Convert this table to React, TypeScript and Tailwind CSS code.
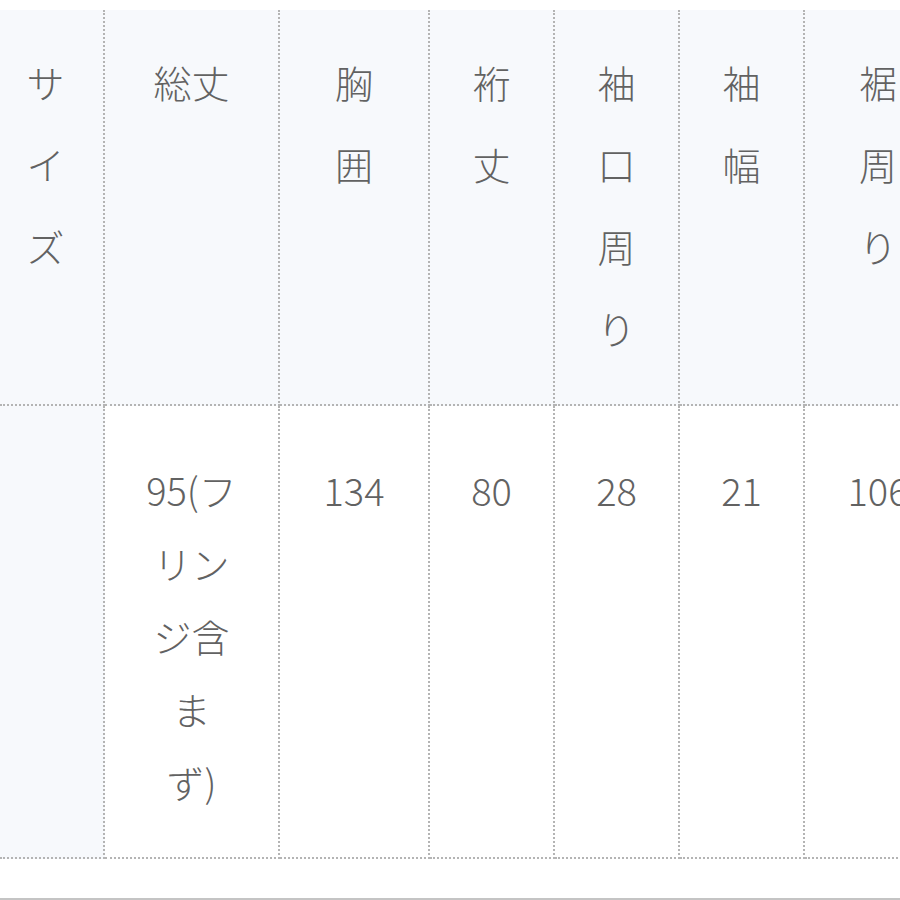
import React from "react";

const headers: { lines: string[]; w: string; extra?: string }[] = [
  { lines: ["サ", "イ", "ズ"], w: "w-[105px]", extra: "pr-[12px]" },
  { lines: ["総丈"], w: "w-[175px]" },
  { lines: ["胸", "囲"], w: "w-[150px]" },
  { lines: ["裄", "丈"], w: "w-[125px]" },
  { lines: ["袖", "口", "周", "り"], w: "w-[125px]" },
  { lines: ["袖", "幅"], w: "w-[125px]" },
  { lines: ["裾", "周", "り"], w: "w-[148px]" },
];

const body: string[][] = [
  [],
  ["95(フ", "リン", "ジ含", "ま", "ず)"],
  ["134"],
  ["80"],
  ["28"],
  ["21"],
  ["106"],
];

export default function App() {
  return (
    <div className="w-[900px] h-[900px] overflow-hidden bg-white flex flex-col border-b-2 border-[#c4c4c4] font-['Noto_Sans_CJK_JP','Liberation_Sans',sans-serif] text-[38px] font-light text-[#626262]">
      <div className="pt-[10px]">
        <table className="table-fixed border-separate border-spacing-0 w-[953px]">
          <tbody>
            <tr>
              {headers.map((h, i) => (
                <th
                  key={i}
                  className={`${h.w} ${h.extra ?? ""} h-[396px] align-top pt-[31px] font-light text-center bg-[#f7f9fc] border-r-2 border-b-2 border-dotted border-[#b4b4b4]`}
                >
                  {h.lines.map((l, j) => (
                    <div key={j} className="leading-[82px] whitespace-nowrap">
                      {l}
                    </div>
                  ))}
                </th>
              ))}
            </tr>
            <tr>
              {body.map((b, i) => (
                <td
                  key={i}
                  className={`h-[453px] align-top pt-[47px] text-center border-r-2 border-b-2 border-dotted border-[#b4b4b4] ${
                    i === 0 ? "bg-[#f7f9fc]" : "bg-white"
                  }`}
                >
                  {b.map((l, j) => (
                    <div key={j} className="leading-[73px] whitespace-nowrap">
                      {l}
                    </div>
                  ))}
                </td>
              ))}
            </tr>
          </tbody>
        </table>
      </div>
    </div>
  );
}
